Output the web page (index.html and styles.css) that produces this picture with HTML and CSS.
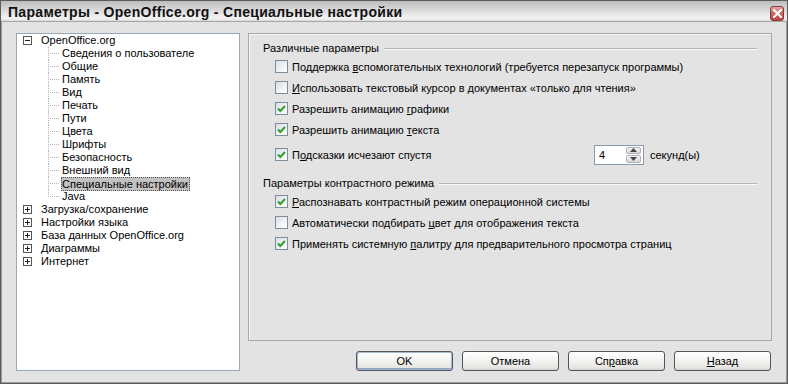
FILE: index.html
```html
<!DOCTYPE html>
<html lang="ru">
<head>
<meta charset="utf-8">
<title>Параметры - OpenOffice.org - Специальные настройки</title>
<link rel="stylesheet" href="styles.css">
</head>
<body>
<div class="window">
  <div class="titlebar">
    <span class="title">Параметры - OpenOffice.org - Специальные настройки</span>
    <span class="close"><svg width="9" height="9" viewBox="0 0 9 9"><path d="M1 1L8 8M8 1L1 8" stroke="#fff" stroke-width="2" stroke-linecap="square"/></svg></span>
  </div>
  <div class="body">
    <div class="tree">
      <div class="row top"><span class="exp minus"></span><span class="lbl">OpenOffice.org</span></div>
      <div class="row child"><span class="branch"></span><span class="lbl">Сведения о пользователе</span></div>
      <div class="row child"><span class="branch"></span><span class="lbl">Общие</span></div>
      <div class="row child"><span class="branch"></span><span class="lbl">Память</span></div>
      <div class="row child"><span class="branch"></span><span class="lbl">Вид</span></div>
      <div class="row child"><span class="branch"></span><span class="lbl">Печать</span></div>
      <div class="row child"><span class="branch"></span><span class="lbl">Пути</span></div>
      <div class="row child"><span class="branch"></span><span class="lbl">Цвета</span></div>
      <div class="row child"><span class="branch"></span><span class="lbl">Шрифты</span></div>
      <div class="row child"><span class="branch"></span><span class="lbl">Безопасность</span></div>
      <div class="row child"><span class="branch"></span><span class="lbl">Внешний вид</span></div>
      <div class="row child"><span class="branch"></span><span class="lbl selected">Специальные настройки</span></div>
      <div class="row child"><span class="branch last"></span><span class="lbl">Java</span></div>
      <div class="row top"><span class="exp plus"></span><span class="lbl">Загрузка/сохранение</span></div>
      <div class="row top"><span class="exp plus"></span><span class="lbl">Настройки языка</span></div>
      <div class="row top"><span class="exp plus"></span><span class="lbl">База данных OpenOffice.org</span></div>
      <div class="row top"><span class="exp plus"></span><span class="lbl">Диаграммы</span></div>
      <div class="row top"><span class="exp plus"></span><span class="lbl">Интернет</span></div>
    </div>
    <div class="right">
      <div class="panel">
        <div class="group-head"><span>Различные параметры</span><span class="rule"></span></div>
        <div class="opt"><span class="cb"></span><span>Поддержка <u>в</u>спомогательных технологий (требуется перезапуск программы)</span></div>
        <div class="opt"><span class="cb"></span><span><u>И</u>спользовать текстовый курсор в документах «только для чтения»</span></div>
        <div class="opt"><span class="cb checked"><svg width="11" height="11" viewBox="0 0 11 11"><path d="M2 5.5L4.3 8L9 3" fill="none" stroke="#2ea12e" stroke-width="2"/></svg></span><span>Разрешить анимацию <u>г</u>рафики</span></div>
        <div class="opt"><span class="cb checked"><svg width="11" height="11" viewBox="0 0 11 11"><path d="M2 5.5L4.3 8L9 3" fill="none" stroke="#2ea12e" stroke-width="2"/></svg></span><span>Разрешить анимацию <u>т</u>екста</span></div>
        <div class="opt spin-row">
          <span class="opt-lbl"><span class="cb checked"><svg width="11" height="11" viewBox="0 0 11 11"><path d="M2 5.5L4.3 8L9 3" fill="none" stroke="#2ea12e" stroke-width="2"/></svg></span><span>П<u>о</u>дсказки исчезают спустя</span></span>
          <span class="spin"><span class="val">4</span><span class="spinbtns"><span class="sb"><svg width="7" height="4" viewBox="0 0 7 4"><path d="M0 4L3.5 0L7 4Z" fill="#444"/></svg></span><span class="sb"><svg width="7" height="4" viewBox="0 0 7 4"><path d="M0 0L3.5 4L7 0Z" fill="#444"/></svg></span></span></span>
          <span class="unit">секунд(ы)</span>
        </div>
        <div class="group-head second"><span>Параметры контрастного режима</span><span class="rule"></span></div>
        <div class="opt"><span class="cb checked"><svg width="11" height="11" viewBox="0 0 11 11"><path d="M2 5.5L4.3 8L9 3" fill="none" stroke="#2ea12e" stroke-width="2"/></svg></span><span><u>Р</u>аспознавать контрастный режим операционной системы</span></div>
        <div class="opt"><span class="cb"></span><span>Автоматически подбирать <u>ц</u>вет для отображения текста</span></div>
        <div class="opt"><span class="cb checked"><svg width="11" height="11" viewBox="0 0 11 11"><path d="M2 5.5L4.3 8L9 3" fill="none" stroke="#2ea12e" stroke-width="2"/></svg></span><span>Применять системную <u>п</u>алитру для предварительного просмотра страниц</span></div>
      </div>
      <div class="buttons">
        <button class="btn default">OK</button>
        <button class="btn">Отмена</button>
        <button class="btn">Сп<u>р</u>авка</button>
        <button class="btn"><u>Н</u>азад</button>
      </div>
    </div>
  </div>
</div>
</body>
</html>
```

FILE: styles.css
```css
* { box-sizing: border-box; }
html, body { margin: 0; padding: 0; }
body {
  width: 788px;
  height: 384px;
  overflow: hidden;
  background: #e3e3e3;
  font-family: "Liberation Sans", Arial, sans-serif;
  font-size: 11px;
  color: #000;
}
.window {
  width: 788px;
  height: 384px;
  border: 1px solid #5c5c5c;
  display: flex;
  flex-direction: column;
  background: #e3e3e3;
}
.titlebar {
  height: 21px;
  flex: none;
  display: flex;
  align-items: center;
  justify-content: space-between;
  padding: 0 3px 0 7px;
  background: linear-gradient(#bdbdbd 0, #cdcdcd 25%, #dedede 50%, #f2f2f2 80%, #e8e8e8 92%, #8a8a8a 100%);
}
.title {
  font-weight: bold;
  font-size: 14px;
  letter-spacing: 0.3px;
  color: #111;
  padding-top: 1px;
}
.close {
  width: 14px;
  height: 15px;
  margin-top: 3px;
  border-radius: 3px;
  border: 1px solid #8a3a3a;
  background: linear-gradient(#e7a3a3, #c65a5a 60%, #b84848);
  display: flex;
  align-items: center;
  justify-content: center;
}
.body {
  flex: 1;
  display: flex;
  gap: 8px;
  padding: 11px 14px 10px 14px;
  border-left: 1px solid #9a9a9a;
  border-right: 1px solid #9a9a9a;
  border-bottom: 1px solid #9a9a9a;
}
.tree {
  width: 224px;
  height: 338px;
  flex: none;
  background: #fff;
  border: 1px solid #9aa9b9;
  padding-top: 0;
}
.row {
  height: 13px;
  display: flex;
  align-items: center;
  white-space: nowrap;
  line-height: 13px;
}
.row.top { padding-left: 6px; }
.exp {
  width: 9px;
  height: 9px;
  border: 1px solid #555;
  flex: none;
  margin-right: 8px;
  background:
    linear-gradient(#222, #222) no-repeat center / 5px 1px;
}
.exp.plus {
  background:
    linear-gradient(#222, #222) no-repeat center / 5px 1px,
    linear-gradient(#222, #222) no-repeat center / 1px 5px;
}
.row.child { padding-left: 31px; }
.branch {
  width: 13px;
  height: 13px;
  flex: none;
  background:
    repeating-linear-gradient(to right, #b4b4b4 0 1px, transparent 1px 2px) no-repeat 0 6px / 12px 1px,
    repeating-linear-gradient(to bottom, #b4b4b4 0 1px, transparent 1px 2px) no-repeat 0 0 / 1px 13px;
}
.branch.last {
  background:
    repeating-linear-gradient(to right, #b4b4b4 0 1px, transparent 1px 2px) no-repeat 0 6px / 12px 1px,
    repeating-linear-gradient(to bottom, #b4b4b4 0 1px, transparent 1px 2px) no-repeat 0 0 / 1px 7px;
}
.lbl { padding: 0 1px; }
.lbl.selected {
  background: #c2c2c2;
  outline: 1px dotted #555;
  outline-offset: -1px;
  line-height: 14px;
  padding: 0 2px 0 1px;
}
.right {
  flex: 1;
  display: flex;
  flex-direction: column;
  gap: 10px;
}
.panel {
  height: 308px;
  border: 1px solid #a8a8a8;
  box-shadow: inset 1px 1px 0 #f6f6f6;
  padding: 7px 14px 0 14px;
}
.group-head {
  height: 14px;
  display: flex;
  align-items: center;
  gap: 5px;
  margin-bottom: 1px;
}
.group-head.second { margin-top: 11px; }
.rule {
  flex: 1;
  height: 2px;
  border-top: 1px solid #b4b4b4;
  border-bottom: 1px solid #fbfbfb;
  margin-top: 1px;
}
.opt {
  height: 21px;
  display: flex;
  align-items: center;
  padding-left: 12px;
  white-space: nowrap;
}
.opt u, .btn u { text-decoration: underline; text-underline-offset: 1px; }
.cb {
  width: 13px;
  height: 13px;
  flex: none;
  margin-right: 4px;
  border: 1px solid #7f8c99;
  background: linear-gradient(135deg, #d9dde2 0%, #eef0f2 50%, #ffffff 100%);
  display: flex;
  align-items: center;
  justify-content: center;
}
.spin-row { margin-top: 4px; }
.opt-lbl {
  width: 319px;
  display: flex;
  align-items: center;
}
.spin {
  width: 50px;
  height: 20px;
  border: 1px solid #8a99a8;
  background: #fff;
  display: flex;
  align-items: center;
  justify-content: space-between;
  padding: 1px 2px 1px 4px;
}
.spinbtns {
  width: 15px;
  height: 16px;
  display: flex;
  flex-direction: column;
  gap: 1px;
}
.sb {
  flex: 1;
  border: 1px solid #b0b0b8;
  border-radius: 2px;
  background: linear-gradient(#f4f4f4, #d8d8d8);
  display: flex;
  align-items: center;
  justify-content: center;
}
.unit { margin-left: 6px; }
.buttons {
  height: 20px;
  display: flex;
  justify-content: flex-end;
  gap: 9px;
  padding-right: 1px;
}
.btn {
  width: 97px;
  height: 20px;
  font-family: inherit;
  font-size: 11px;
  color: #000;
  border: 1px solid #4e5660;
  border-radius: 3px;
  background: linear-gradient(#ffffff 0%, #f4f4f2 45%, #e6e6e2 85%, #d2d2ce 100%);
  padding: 0;
}
.btn.default {
  box-shadow: inset 0 0 0 1px #a9b8cc, inset 0 -1px 0 1px #8ea2bd;
}
```
